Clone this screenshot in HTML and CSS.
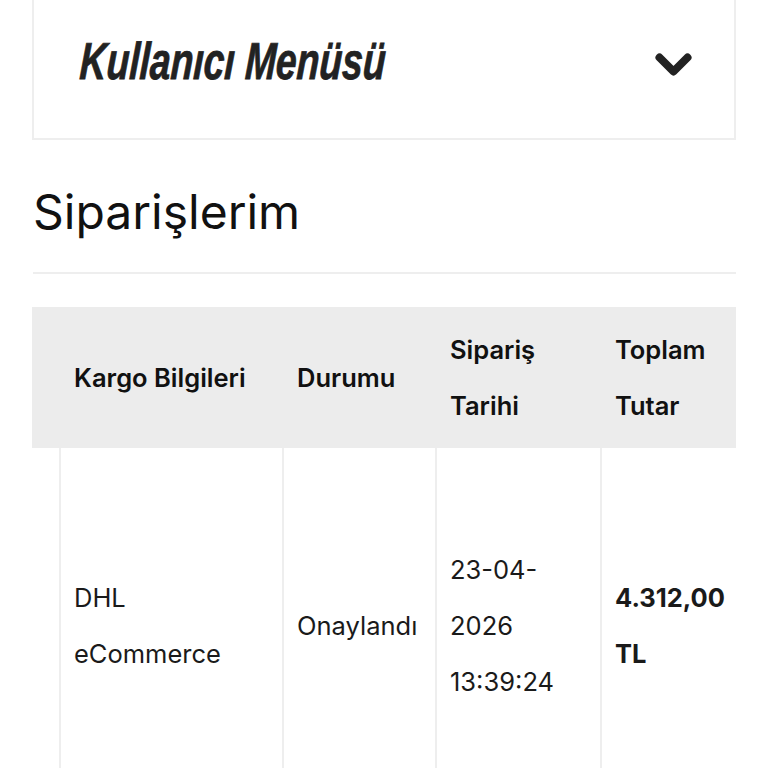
FILE: index.html
```html
<!DOCTYPE html>
<html lang="tr">
<head>
<meta charset="utf-8">
<title>Siparişlerim</title>
<link rel="stylesheet" href="styles.css">
</head>
<body>
<div class="page">
  <div class="menu-box">
    <span class="menu-title">Kullanıcı Menüsü</span>
    <svg class="chevron" width="37" height="24" viewBox="0 0 37 24" aria-hidden="true">
      <polyline points="4.5,4.5 18.5,18.5 32.5,4.5" fill="none" stroke="#222" stroke-width="8" stroke-linecap="round" stroke-linejoin="round"/>
    </svg>
  </div>

  <h2 class="page-title">Siparişlerim</h2>

  <div class="table-wrap">
    <table class="orders">
      <colgroup>
        <col class="c0"><col class="c1"><col class="c2"><col class="c3"><col class="c4">
      </colgroup>
      <thead>
        <tr>
          <th></th>
          <th>Kargo Bilgileri</th>
          <th>Durumu</th>
          <th>Sipariş Tarihi</th>
          <th>Toplam Tutar</th>
        </tr>
      </thead>
      <tbody>
        <tr>
          <td class="blank"></td>
          <td>DHL eCommerce</td>
          <td>Onaylandı</td>
          <td>23-04-<wbr>2026 13:39:24</td>
          <td class="amount">4.312,00 TL</td>
        </tr>
      </tbody>
    </table>
  </div>
</div>
</body>
</html>
```

FILE: styles.css
```css
html, body {
  margin: 0;
  padding: 0;
  background: #fff;
}

body {
  font-family: Inter, "Noto Sans", "Liberation Sans", sans-serif;
  color: #111;
}

.page {
  padding: 0 32px;
}

.menu-box {
  box-sizing: border-box;
  height: 150px;
  margin-top: -10px;
  border: 2px solid #eeeeee;
  display: flex;
  align-items: center;
  justify-content: space-between;
  padding: 0 42px 0 46px;
}

.menu-title {
  display: inline-block;
  font-family: "Liberation Sans", Arial, sans-serif;
  font-weight: 700;
  font-style: italic;
  font-size: 52px;
  line-height: 1;
  color: #222;
  white-space: nowrap;
  transform: scaleX(0.715) skewX(-4deg);
  transform-origin: left center;
  -webkit-text-stroke: 0.8px #222;
  margin-top: -8px;
}

.chevron {
  display: block;
}

.page-title {
  font-size: 48px;
  font-weight: 400;
  line-height: 58px;
  margin: 43px 0 0 1px;
  padding-bottom: 31px;
  border-bottom: 2px solid #eeeeee;
  color: #111;
}

.table-wrap {
  margin-top: 33px;
  overflow: hidden;
}

.orders {
  border-collapse: collapse;
  table-layout: fixed;
  width: 719px;
}

.c0 { width: 28px; }
.c1 { width: 223px; }
.c2 { width: 153px; }
.c3 { width: 165px; }
.c4 { width: 150px; }

.orders th {
  background: #ececec;
  font-weight: 600;
  font-size: 25.5px;
  line-height: 56px;
  text-align: left;
  padding: 15px 13px 14px;
  border-left: 2px solid #ececec;
  color: #111;
}

.orders th:first-child {
  border-left: none;
}

.orders td {
  font-size: 25.5px;
  line-height: 56px;
  padding: 94px 13px;
  border-left: 2px solid #eeeeee;
  vertical-align: middle;
  color: #1a1a1a;
}

.orders td.blank {
  border-left: none;
}

.orders td.amount {
  font-weight: 700;
}
```
